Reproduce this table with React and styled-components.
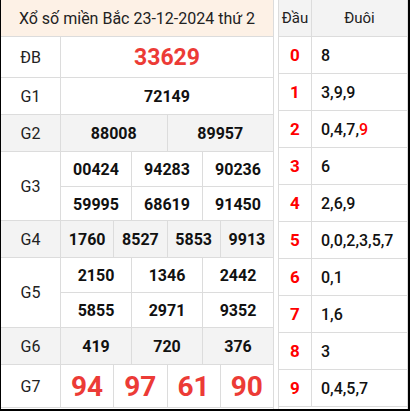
import React from 'react';
import styled, { createGlobalStyle } from 'styled-components';

const GlobalStyle = createGlobalStyle`
  html, body {
    margin: 0;
    padding: 0;
    background: #fff;
  }
  body {
    font-family: Roboto, "Liberation Sans", Arial, sans-serif;
  }
`;

const Frame = styled.div`
  box-sizing: border-box;
  width: 410px;
  height: 411px;
  border-left: 1px solid #000;
  border-right: 2px solid #000;
  border-bottom: 2px solid #000;
  display: flex;
  flex-direction: row;
  gap: 4px;
  overflow: hidden;
  color: #111;
`;

const Results = styled.div`
  box-sizing: border-box;
  width: 273px;
  border-right: 1px solid #dcdcdc;
  display: flex;
  flex-direction: column;
`;

const Title = styled.div`
  box-sizing: border-box;
  height: 37px;
  border-bottom: 1px solid #dcdcdc;
  background: #fdf1e6;
  display: flex;
  align-items: center;
  justify-content: center;
  font-size: 16px;
  color: #222;
`;

const Row = styled.div`
  box-sizing: border-box;
  display: flex;
  height: ${p => p.h}px;
  border-bottom: 1px solid #dcdcdc;
  background: ${p => (p.grey ? '#f3f3f3' : '#fff')};
`;

const Label = styled.div`
  box-sizing: border-box;
  width: 60px;
  flex: none;
  border-right: 1px solid #dcdcdc;
  display: flex;
  align-items: center;
  justify-content: center;
  font-size: 16px;
  color: #222;
`;

const Values = styled.div`
  flex: 1;
  display: flex;
  flex-direction: column;
`;

const Line = styled.div`
  box-sizing: border-box;
  flex: ${p => p.h ? 'none' : 1};
  height: ${p => (p.h ? `${p.h}px` : 'auto')};
  display: flex;
  border-bottom: ${p => (p.divider ? '1px solid #dcdcdc' : 'none')};
`;

const Cell = styled.div`
  box-sizing: border-box;
  flex: 1 1 0;
  display: flex;
  align-items: center;
  justify-content: center;
  font-weight: 700;
  font-size: ${p => p.size || 16}px;
  color: ${p => (p.red ? '#ec3b36' : '#111')};
  & + & {
    border-left: 1px solid #dcdcdc;
  }
`;

const Loto = styled.div`
  box-sizing: border-box;
  width: 130px;
  border-left: 1px solid #dcdcdc;
  border-right: 1px solid #dcdcdc;
  display: flex;
  flex-direction: column;
`;

const LotoRow = styled.div`
  box-sizing: border-box;
  height: 37px;
  display: flex;
  border-bottom: 1px solid #dcdcdc;
  background: ${p => (p.head ? '#f3f3f3' : '#fff')};
`;

const Head = styled.div`
  box-sizing: border-box;
  width: 33px;
  flex: none;
  border-right: 1px solid #dcdcdc;
  display: flex;
  align-items: center;
  justify-content: center;
  font-size: ${p => (p.title ? 15 : 17)}px;
  font-weight: ${p => (p.title ? 400 : 700)};
  color: ${p => (p.title ? '#222' : '#f00')};
`;

const Tail = styled.div`
  flex: 1;
  display: flex;
  align-items: center;
  justify-content: ${p => (p.title ? 'center' : 'flex-start')};
  padding-left: ${p => (p.title ? 0 : 9)}px;
  font-size: ${p => (p.title ? 15 : 16)}px;
  font-weight: ${p => (p.title ? 400 : 500)};
  color: ${p => (p.title ? '#222' : '#111')};
`;

const Hit = styled.span`
  color: #f00;
`;

const prizes = [
  { label: 'ĐB', h: 41, lines: [['33629']], size: 23, red: true },
  { label: 'G1', h: 37, lines: [['72149']] },
  { label: 'G2', h: 37, lines: [['88008', '89957']], grey: true },
  { label: 'G3', lines: [['00424', '94283', '90236'], ['59995', '68619', '91450']], sub: [35, 34] },
  { label: 'G4', h: 37, lines: [['1760', '8527', '5853', '9913']], grey: true },
  { label: 'G5', lines: [['2150', '1346', '2442'], ['5855', '2971', '9352']], sub: [35, 35] },
  { label: 'G6', h: 37, lines: [['419', '720', '376']], grey: true },
  { label: 'G7', h: 43, lines: [['94', '97', '61', '90']], size: 28, red: true },
];

const loto = [
  ['8'],
  ['3', '9', '9'],
  ['0', '4', '7', '9*'],
  ['6'],
  ['2', '6', '9'],
  ['0', '0', '2', '3', '5', '7'],
  ['0', '1'],
  ['1', '6'],
  ['3'],
  ['0', '4', '5', '7'],
];

function TailList({ items }) {
  return items.map((t, i) => (
    <React.Fragment key={i}>
      {i > 0 && ','}
      {t.endsWith('*') ? <Hit>{t.slice(0, -1)}</Hit> : t}
    </React.Fragment>
  ));
}

export default function App() {
  return (
    <>
      <GlobalStyle />
      <Frame>
        <Results>
          <Title>Xổ số miền Bắc 23-12-2024 thứ 2</Title>
          {prizes.map(p => {
            const h = p.h || p.sub.reduce((a, b) => a + b, 0);
            return (
              <Row key={p.label} h={h} grey={p.grey}>
                <Label>{p.label}</Label>
                <Values>
                  {p.lines.map((line, i) => (
                    <Line
                      key={i}
                      h={p.sub ? p.sub[i] : 0}
                      divider={p.sub && i < p.lines.length - 1}
                    >
                      {line.map(n => (
                        <Cell key={n} size={p.size} red={p.red}>{n}</Cell>
                      ))}
                    </Line>
                  ))}
                </Values>
              </Row>
            );
          })}
        </Results>
        <Loto>
          <LotoRow head>
            <Head title>Đầu</Head>
            <Tail title>Đuôi</Tail>
          </LotoRow>
          {loto.map((items, d) => (
            <LotoRow key={d}>
              <Head>{d}</Head>
              <Tail><TailList items={items} /></Tail>
            </LotoRow>
          ))}
        </Loto>
      </Frame>
    </>
  );
}
